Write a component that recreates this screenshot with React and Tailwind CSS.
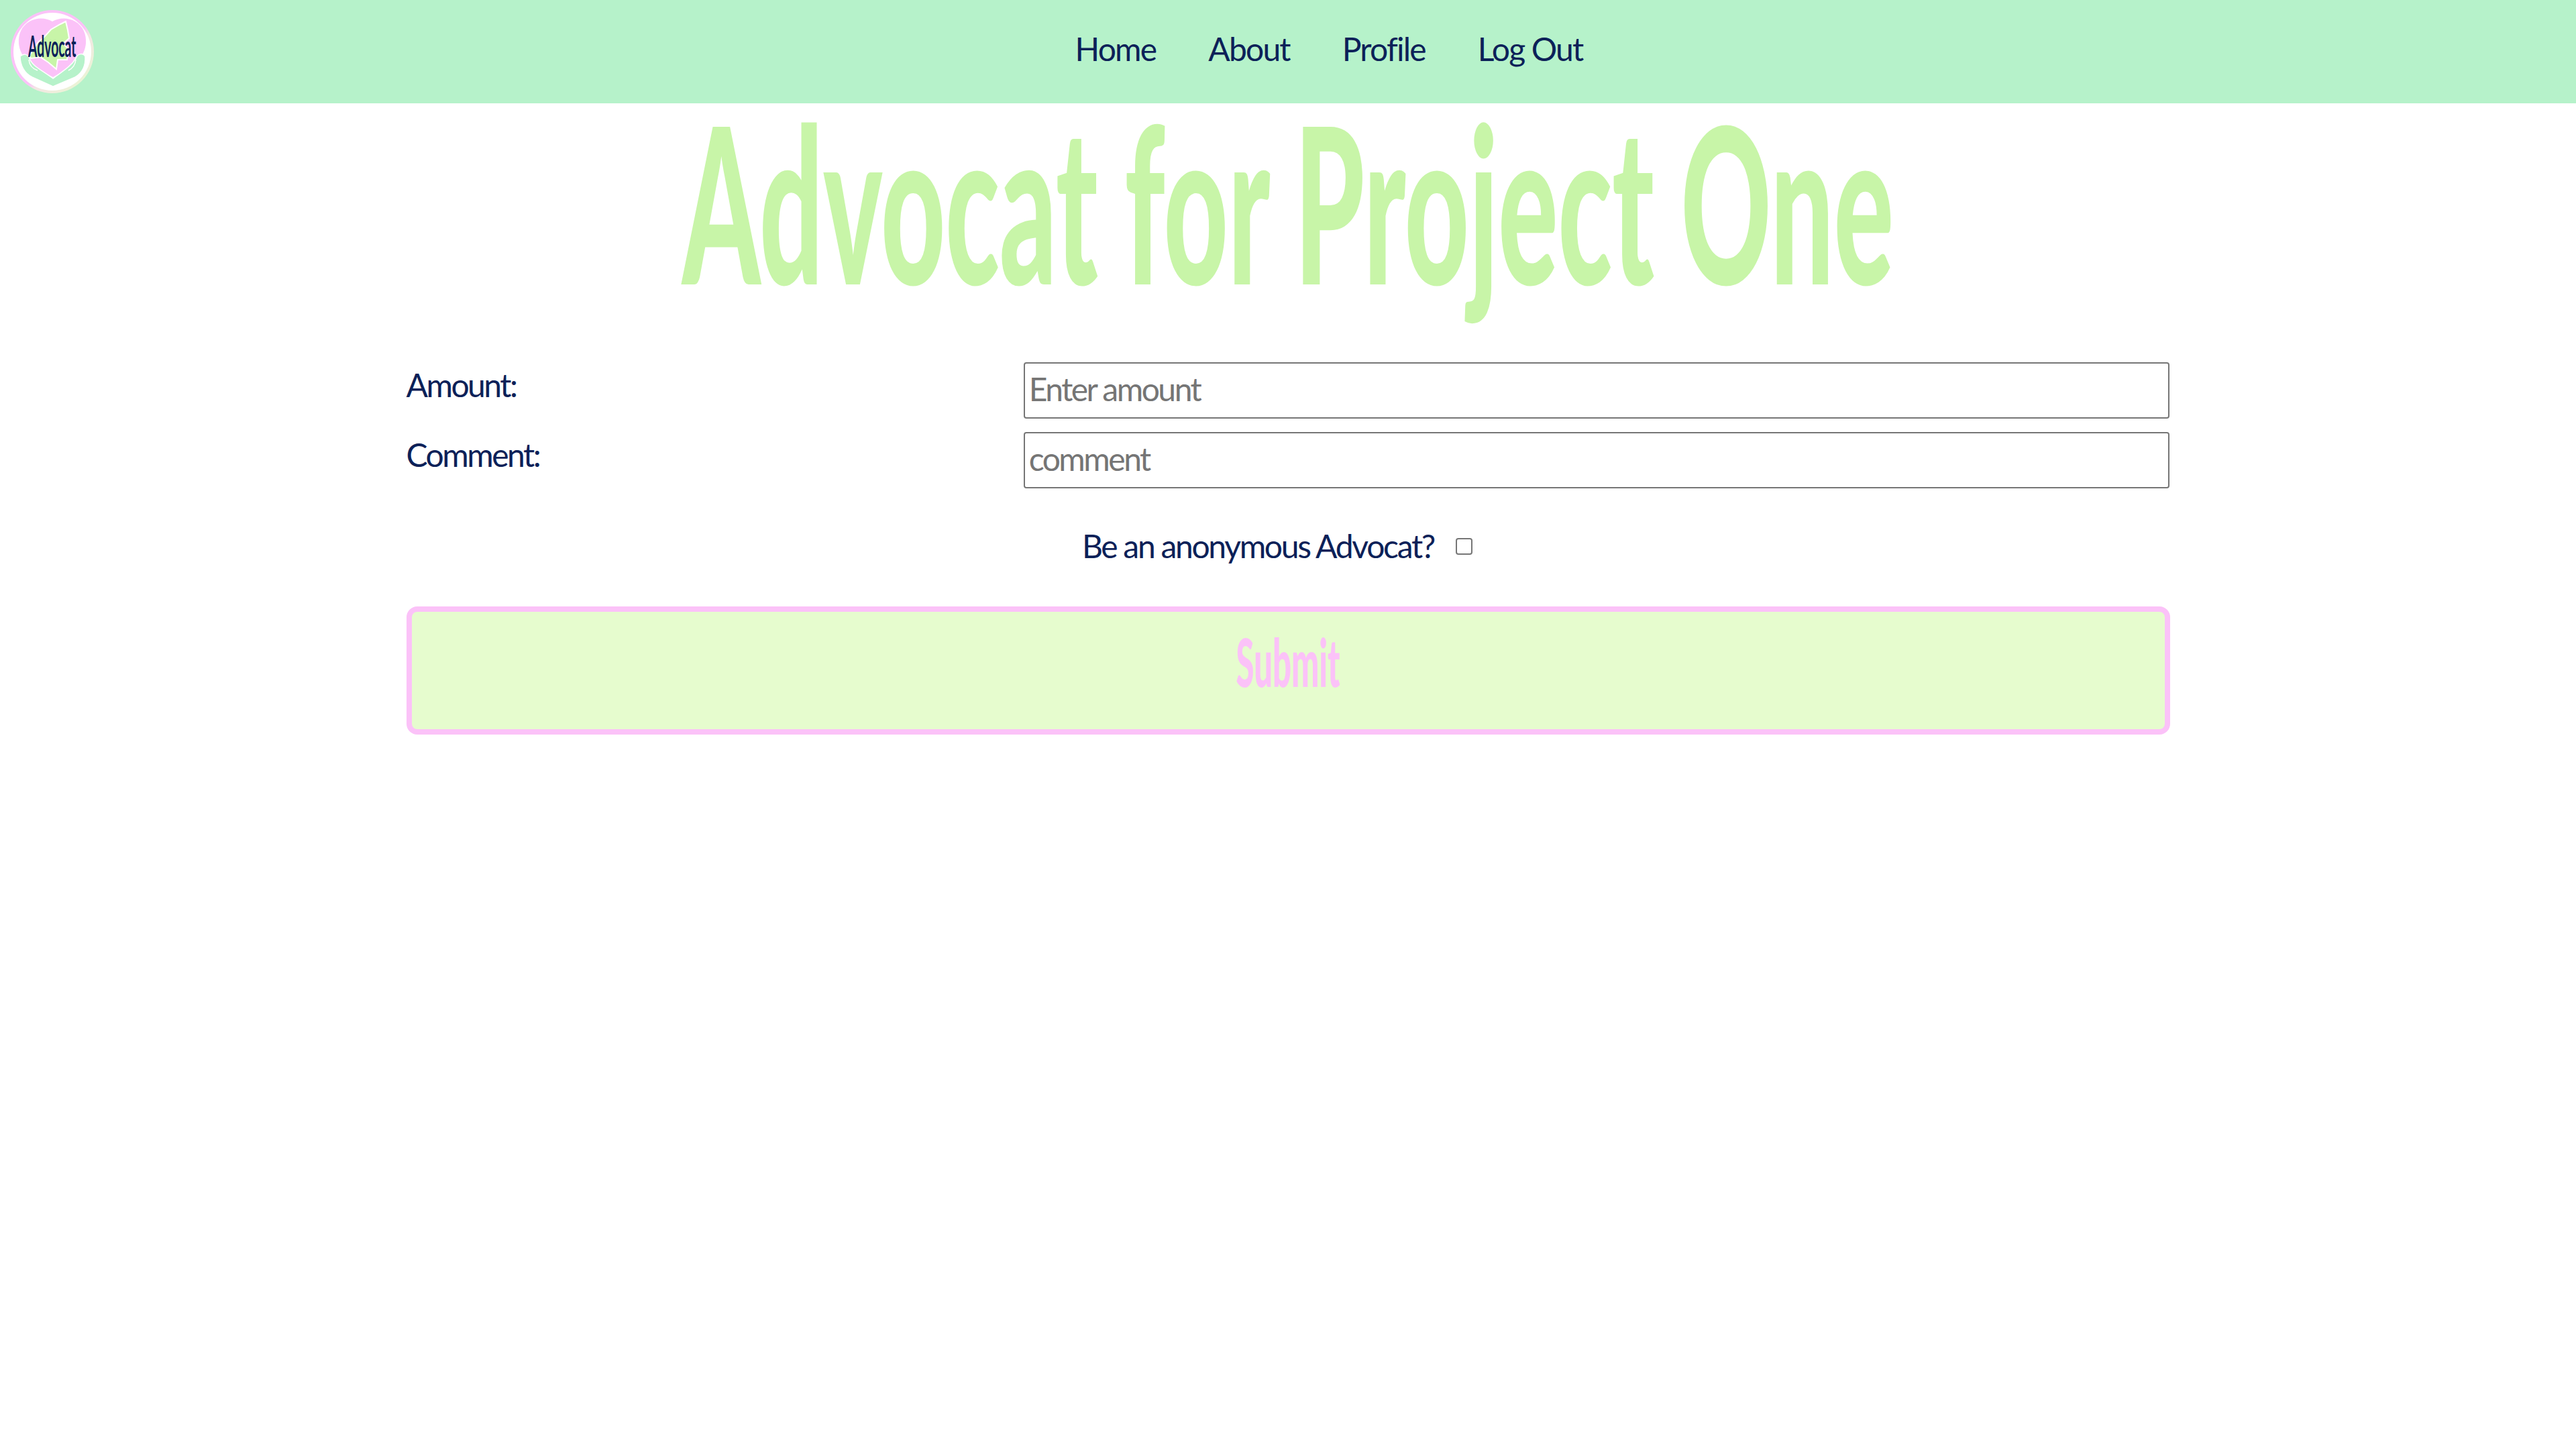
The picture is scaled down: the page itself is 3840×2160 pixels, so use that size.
import React from 'react';

const hand = { fontFamily: 'Lato, "Open Sans", sans-serif' };

const Logo = () => (
  <svg viewBox="0 0 124 124" className="w-[124px] h-[124px] shrink-0">
    <defs>
      <linearGradient id="ring" x1="0" y1="0" x2="1" y2="1">
        <stop offset="0.55" stopColor="#fbc2f8" />
        <stop offset="0.62" stopColor="#f3e6e4" />
        <stop offset="1" stopColor="#e6fcce" />
      </linearGradient>
    </defs>
    <circle cx="62" cy="62" r="62" fill="url(#ring)" />
    <circle cx="62" cy="62" r="58" fill="#ffffff" />
    <path d="M62 17 C52 11 38 11 28 17 C16 24 11 36 12 50 C14 68 24 80 63 100 C100 80 110 68 112 50 C113 36 108 24 96 17 C86 11 72 11 62 17 Z" fill="#fbc2f8" />
    <path d="M74 21 L82 17 L85 30 L87 42 L78 50 L86 58 L84 74 L70 74 L68 88 L56 78 L44 70 L30 72 L28 68 L40 49 L50 40 L60 29 Z" fill="#c8f5a8" stroke="#ffffff" strokeWidth="2" />
    <path d="M14 69 C20 64 24 66 27 70 C32 84 44 88 63 102 C76 92 90 84 97 72 C100 64 108 64 111 69 C112 84 106 94 96 100 L63 114 L32 100 C20 94 14 82 14 69 Z" fill="#b6f2ca" stroke="#ffffff" strokeWidth="1.5" />
    <path d="M27 74 C28 84 34 88 40 90 M97 74 C96 84 90 88 86 90" fill="none" stroke="#ffffff" strokeWidth="1.5" />
    <text transform="translate(26 70) scale(0.44 1)" fontSize="44" fontWeight="700" fill="#0c2158" style={hand}>Advocat</text>
  </svg>
);

const App = () => {
  const links = ['Home', 'About', 'Profile', 'Log Out'];

  return (
    <div className="min-h-[2160px] bg-white text-[#0c2158]" style={hand}>
      <nav className="h-[154px] bg-[#b6f2ca] flex items-center pl-4">
        <Logo />
        <ul className="flex-1 flex justify-center items-center gap-[78px] pb-[8px] pr-[18px] text-[48px] leading-none tracking-[-1.8px]">
          {links.map((l) => (
            <li key={l}><a href="#">{l}</a></li>
          ))}
        </ul>
      </nav>

      <div className="h-[386px] flex justify-center">
        <h1 className="h-[290px] text-[324px] leading-[290px] font-black text-[#c8f5a8] whitespace-nowrap scale-x-[0.514]">
          Advocat for Project One
        </h1>
      </div>

      <form className="w-[2629px] mx-auto">
        <div className="grid grid-cols-[35%_65%] gap-y-[20px]">
          <label className="text-[48px] leading-[68px] tracking-[-2.5px]">Amount:</label>
          <input
            placeholder="Enter amount"
            className="h-[84px] w-full border-2 border-[#767676] rounded-[4px] px-[6px] pb-[6px] text-[48px] tracking-[-2.5px] placeholder:text-[#757575] bg-white"
          />
          <label className="text-[48px] leading-[68px] tracking-[-2.5px]">Comment:</label>
          <input
            placeholder="comment"
            className="h-[84px] w-full border-2 border-[#767676] rounded-[4px] px-[6px] pb-[6px] text-[48px] tracking-[-2.5px] placeholder:text-[#757575] bg-white"
          />
        </div>

        <div className="flex justify-center items-center mt-[62px] h-[48px] text-[48px] tracking-[-2.3px]">
          <span>Be an anonymous Advocat?</span>
          <input
            type="checkbox"
            className="appearance-none w-[25px] h-[25px] ml-[32px] mr-[32px] bg-white border-2 border-[#767676] rounded-[4px]"
          />
        </div>

        <button
          type="button"
          className="block w-full h-[191px] mt-[66px] pb-[30px] bg-[#e6fcce] border-[8px] border-[#fbc2f8] rounded-[16px] text-[#fbc2f8] font-black text-[100px] leading-none"
        >
          <span className="inline-block scale-x-[0.49]">Submit</span>
        </button>
      </form>
    </div>
  );
};

export default App;
